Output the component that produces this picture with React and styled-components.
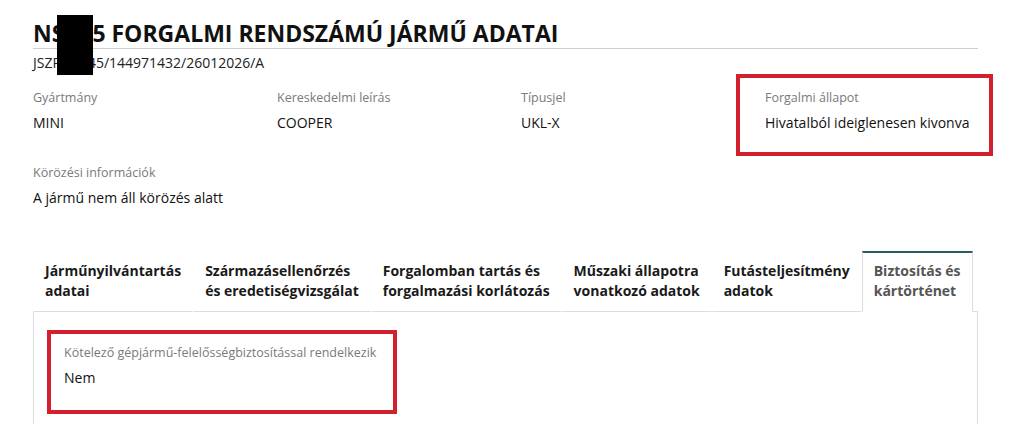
import React from 'react';
import styled, { createGlobalStyle } from 'styled-components';

const GlobalStyle = createGlobalStyle`
  body {
    margin: 0;
    background: #fff;
    font-family: "Open Sans", "Noto Sans", sans-serif;
    color: #1a1a1a;
    overflow: hidden;
  }
`;

const fields = [
  { label: 'Gyártmány', value: 'MINI' },
  { label: 'Kereskedelmi leírás', value: 'COOPER' },
  { label: 'Típusjel', value: 'UKL-X' },
  { label: 'Forgalmi állapot', value: 'Hivatalból ideiglenesen kivonva', highlight: true },
];

const tabs = [
  ['Járműnyilvántartás', 'adatai'],
  ['Származásellenőrzés', 'és eredetiségvizsgálat'],
  ['Forgalomban tartás és', 'forgalmazási korlátozás'],
  ['Műszaki állapotra', 'vonatkozó adatok'],
  ['Futásteljesítmény', 'adatok'],
  ['Biztosítás és', 'kártörténet'],
];

const Field = ({ label, value, highlight }) => (
  <FieldBox $highlight={highlight}>
    <Label>{label}</Label>
    <Value>{value}</Value>
  </FieldBox>
);

export default function App() {
  return (
    <>
      <GlobalStyle />
      <Page>
        <Header>
          <Title>NS<Hidden $w={28} />5 FORGALMI RENDSZÁMÚ JÁRMŰ ADATAI</Title>
          <Subtitle>JSZP<Hidden $w={27} />45/144971432/26012026/A</Subtitle>
          <Redaction />
        </Header>

        <FieldGrid>
          {fields.map((f) => (
            <Field key={f.label} {...f} />
          ))}
        </FieldGrid>

        <FieldGrid>
          <Field label="Körözési információk" value="A jármű nem áll körözés alatt" />
        </FieldGrid>

        <Tabs>
          <TabList>
            {tabs.map((t, i) => (
              <Tab key={i} $active={i === tabs.length - 1}>
                <span>{t[0]}</span>
                <span>{t[1]}</span>
              </Tab>
            ))}
            <TabFill />
          </TabList>
          <Panel>
            <PanelField $highlight>
              <Label>Kötelező gépjármű-felelősségbiztosítással rendelkezik</Label>
              <Value>Nem</Value>
            </PanelField>
          </Panel>
        </Tabs>
      </Page>
    </>
  );
}

const Page = styled.div`
  padding-left: 33px;
  height: 424px;
`;

const Header = styled.div`
  position: relative;
  width: 945px;
  padding-top: 19px;
`;

const Title = styled.h1`
  margin: 0;
  font-size: 23px;
  line-height: 29px;
  font-weight: 700;
  color: #111;
  border-bottom: 1px solid #cfcfcf;
  display: flex;
  align-items: baseline;
  white-space: pre;
`;

const Hidden = styled.span`
  display: inline-block;
  width: ${({ $w }) => $w}px;
`;

const Subtitle = styled.div`
  display: flex;
  font-size: 14px;
  line-height: 20px;
  margin-top: 4px;
  color: #222;
`;

const Redaction = styled.div`
  position: absolute;
  left: 24px;
  top: 15px;
  width: 36px;
  height: 60px;
  background: #000;
`;

const FieldGrid = styled.div`
  display: grid;
  grid-template-columns: repeat(4, 244px);
  margin-top: 16px;
  & + & {
    margin-top: 31px;
  }
`;

const FieldBox = styled.div`
  position: relative;

  ${({ $highlight }) =>
    $highlight &&
    `
    &::after {
      content: '';
      position: absolute;
      left: -29px;
      top: -15px;
      right: 16px;
      bottom: -23px;
      border: 4px solid #d3202f;
    }
  `}
`;

const Label = styled.div`
  font-size: 12.5px;
  line-height: 18px;
  color: #7a7a7a;
`;

const Value = styled.div`
  font-size: 14px;
  line-height: 20px;
  margin-top: 6px;
  color: #111;
`;

const Tabs = styled.div`
  width: 945px;
  margin-top: 43px;
`;

const TabList = styled.div`
  display: flex;
  align-items: stretch;
`;

const Tab = styled.div`
  display: flex;
  flex-direction: column;
  padding: 8px 11px 10px;
  font-size: 14px;
  line-height: 20px;
  font-weight: 700;
  white-space: nowrap;
  color: ${({ $active }) => ($active ? '#555' : '#1a1a1a')};
  background: #fff;
  border-top: 2px solid ${({ $active }) => ($active ? '#2c5c63' : 'transparent')};
  border-left: 1px solid ${({ $active }) => ($active ? '#ddd' : 'transparent')};
  border-right: 1px solid ${({ $active }) => ($active ? '#ddd' : 'transparent')};
  border-bottom: 1px solid ${({ $active }) => ($active ? 'transparent' : '#ddd')};
`;

const TabFill = styled.div`
  flex: 1;
  border-bottom: 1px solid #ddd;
`;

const Panel = styled.div`
  box-sizing: border-box;
  height: 120px;
  border: 1px solid #ddd;
  border-top: none;
  padding: 32px 30px;
`;

const PanelField = styled(FieldBox)`
  display: inline-block;

  &::after {
    left: -17px;
    top: -14px;
    right: -21px;
    bottom: -26px;
  }
`;
